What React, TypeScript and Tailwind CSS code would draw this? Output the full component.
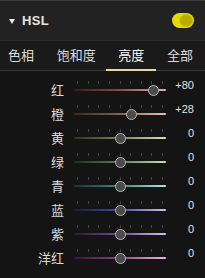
import React from 'react'

const tabs = ['色相', '饱和度', '亮度', '全部']

const rows = [
  { label: '红', value: 80, track: 'bg-[linear-gradient(to_right,#3f1a20,#8a4650,#e6b0b6)]' },
  { label: '橙', value: 28, track: 'bg-[linear-gradient(to_right,#3d2718,#8a6048,#e8c4b0)]' },
  { label: '黄', value: 0, track: 'bg-[linear-gradient(to_right,#2e3418,#7a8648,#dae0b0)]' },
  { label: '绿', value: 0, track: 'bg-[linear-gradient(to_right,#1c3418,#4f8a44,#bfe2b0)]' },
  { label: '青', value: 0, track: 'bg-[linear-gradient(to_right,#163430,#3f8a7c,#b4e2da)]' },
  { label: '蓝', value: 0, track: 'bg-[linear-gradient(to_right,#1a1a46,#4c4a9a,#c8c4ec)]' },
  { label: '紫', value: 0, track: 'bg-[linear-gradient(to_right,#2a1a3e,#6e4c94,#d4c0e8)]' },
  { label: '洋红', value: 0, track: 'bg-[linear-gradient(to_right,#3a1438,#8c4488,#ecb8e4)]' }
]

function Slider({ value, track }: { value: number; track: string }) {
  // knob travel is a bit shorter than the track
  const left = 46 + value * 0.42
  return (
    <div className="relative w-[92px] h-[24px] shrink-0">
      <div className="absolute left-0 right-0 top-[3px] h-[3px] flex justify-between px-[3px]">
        {Array.from({ length: 9 }).map((_, i) => (
          <div key={i} className="w-px h-full bg-[#444444]" />
        ))}
      </div>
      <div className={`absolute left-0 right-0 top-[11px] h-[2px] rounded-full ${track}`} />
      <div
        className="absolute top-[6.5px] w-[11px] h-[11px] -ml-[5.5px] rounded-full bg-[#4b4b4b] border border-[#b4b4b4]"
        style={{ left }}
      />
    </div>
  )
}

export default function App() {
  return (
    <div className="w-[205px] h-[278px] bg-[#141414] overflow-hidden font-['Liberation_Sans','Noto_Sans_CJK_SC',sans-serif]">
      {/* header */}
      <div className="h-[41px] bg-[#222222] border-t border-[#3a3a3a] border-b border-b-[#2c2c2c] flex items-center pl-[9px] pr-[11px]">
        <div className="w-0 h-0 border-l-[3.5px] border-r-[3.5px] border-t-[5px] border-l-transparent border-r-transparent border-t-[#e8e8e8] mt-[1px]" />
        <span className="ml-[7px] text-[13px] font-bold text-[#e2e2e2] tracking-[0.3px]">HSL</span>
        <div className="ml-auto w-[22px] h-[15px] rounded-full bg-[#e6da00] flex items-center justify-end pr-[1px]">
          <div className="w-[14px] h-[13px] rounded-full bg-[#b8ac00] border border-[#d2c600]" />
        </div>
      </div>

      {/* tabs */}
      <div className="h-[30px] bg-[#1a1a1a] border-b border-[#383838] flex items-center justify-between pl-[8px] pr-[12px]">
        {tabs.map((t) => (
          <div
            key={t}
            className={`relative h-full flex items-center text-[13px] ${t === '亮度' ? 'text-white' : 'text-[#dcdcdc]'}`}
          >
            {t}
            {t === '亮度' && (
              <span className="absolute -bottom-px left-[-12px] right-[-12px] h-[2px] bg-[#ead89a]" />
            )}
          </div>
        ))}
      </div>

      {/* sliders */}
      <div className="pt-[7px]">
        {rows.map((r) => (
          <div key={r.label} className="h-[24px] flex items-center">
            <div className="w-[64px] text-right text-[13px] text-[#dcdcdc] pt-[2px]">{r.label}</div>
            <div className="ml-[10px]">
              <Slider value={r.value} track={r.track} />
            </div>
            <div className="flex-1 self-start text-right pr-[11px] text-[11px] leading-[14px] text-[#e0e0e0]">
              {r.value > 0 ? `+${r.value}` : r.value}
            </div>
          </div>
        ))}
      </div>
    </div>
  )
}
